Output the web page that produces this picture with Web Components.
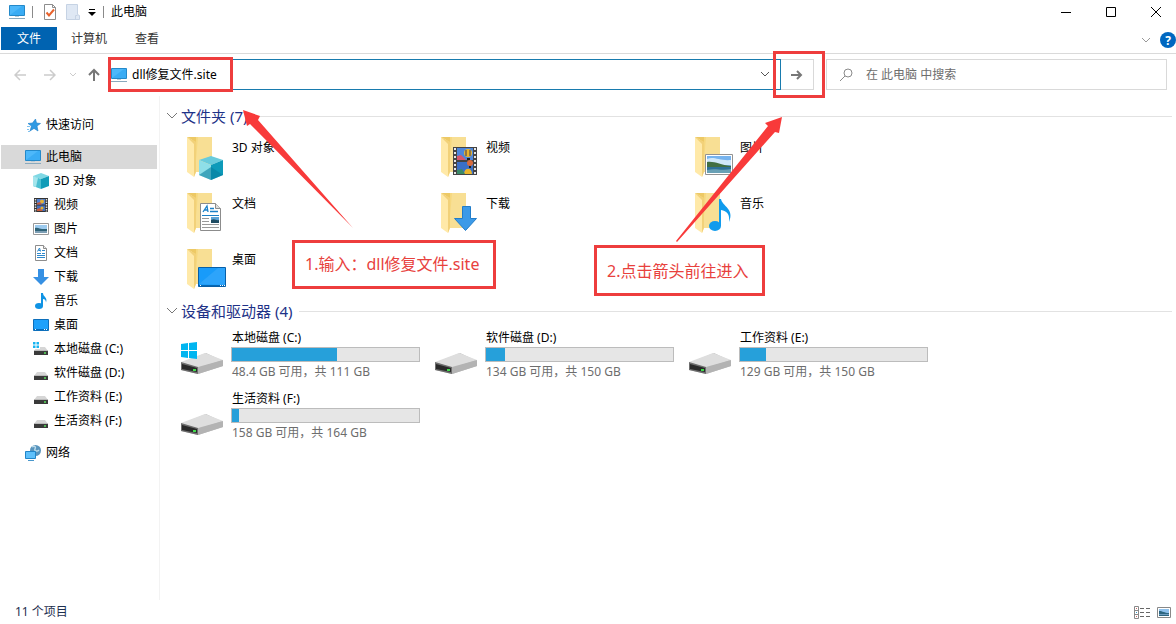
<!DOCTYPE html>
<html lang="zh-CN">
<head>
<meta charset="utf-8">
<meta name="viewport" content="width=device-width, initial-scale=1">
<title>此电脑</title>
<style>
  html, body {
    height: 100%;
    margin: 0;
  }

  body {
    background: #fff;
    color: #000;
    font: 12px/18px "Noto Sans", "Noto Sans CJK SC", sans-serif;
  }
</style>
</head>
<body>
<file-explorer></file-explorer>

<script>
const define = (name, html, setup) => {
  const template = document.createElement('template');
  template.innerHTML = html;

  customElements.define(name, class extends HTMLElement {
    constructor() {
      super();
      this.attachShadow({ mode: 'open' });
      this.shadowRoot.appendChild(template.content.cloneNode(true));
    }

    connectedCallback() {
      if (setup) setup(this, this.shadowRoot);
    }
  });
};

// Small icons, 16x16
const SMALL = {
  pc: `
    <path d="M.5 1.500h15v10H.5z" fill="#4db8fa" stroke="#2489c9"/>
    <path d="M1 11 13 2h2v9z" fill="#2ba2ee" opacity=".55"/>
    <path d="M0 14.500h16" stroke="#8aa9bd"/><path d="M6 12.500h4" stroke="#b9cbd6"/>`,
  check: `
    <path d="M2.500.5h8l3 3v12h-11z" fill="#fff" stroke="#8d8d8d"/>
    <path d="M10.500.5v3h3" fill="none" stroke="#8d8d8d"/>
    <path d="m4.500 8.500 2.500 3 5-6" fill="none" stroke="#e8622c" stroke-width="2"/>`,
  blank: `
    <path d="M1.500.5h11v10l2 1v4h-13z" fill="#dfe8f4" stroke="#c6d3e4"/>
    <path d="M12.500 11.500h-2v4" fill="none" stroke="#c6d3e4"/>`,
  star: `
    <path d="m10.500 2 1 4 4 .5-3.500 2.500 1 5-4-2.600-4 2.600 1.500-5-3.500-2.500 4.500-.5z" fill="#2f9ae3" stroke="#1c7fc9" stroke-width=".6"/>
    <path d="M2 9.500h3M2 12.500h2M3 14.500h2" stroke="#80c2ef"/>`,
  cube: `
    <path d="M8 0 16 3 8 6 0 3z" fill="#7fd8e4"/><path d="M0 3 8 6v10L0 13z" fill="#4cc0d2"/>
    <path d="M16 3 8 6v10l8-3z" fill="#119cb8"/><path d="M0 3 5 5 3 14 0 13z" fill="#a4e5ec"/>`,
  film: `
    <path d="M1 1h14v14H1z" fill="#333"/><path d="M4 2h8v5.500H4z" fill="#4f7fd1"/><path d="M4 8.500h8V14H4z" fill="#4270bd"/>
    <path d="M2.500 2v13M13.500 2v13" stroke="#ddd" stroke-width="1.500" stroke-dasharray="1.500 1"/>
    <circle cx="9" cy="4.500" r="2" fill="#e5b233"/><path d="M4 7.500V6l3-1 2 2.500zM4 14v-2l3-1 3 3z" fill="#c75b3c"/><circle cx="9" cy="11" r="1.500" fill="#e5b233"/>`,
  image: `
    <path d="M.5 2.500h15v11H.5z" fill="#fff" stroke="#999"/><path d="M2 4h12v8H2z" fill="#9dcbef"/>
    <path d="M2 7c3-1 5 1 7 1h5v4H2z" fill="#2f6378"/><path d="M2 10h12v2H2z" fill="#7c9eb4"/>`,
  doc: `
    <path d="M2.500.5h8l3 3v12h-11z" fill="#fff" stroke="#8d8d8d"/><path d="M10.500.5v3h3" fill="#eee" stroke="#8d8d8d"/>
    <path d="M4.500 6.500 6.500 3l1 3.500M5.500 5.500h2" fill="none" stroke="#2d88cc"/>
    <path d="M9 5.500h3M4 8.500h4M9 8.500h3M4 10.500h8M4 12.500h8" stroke="#2d88cc"/>`,
  down: `<path d="M5 0h6v8h5l-8 8-8-8h5z" fill="#3690e3"/>`,
  music: `
    <ellipse cx="6" cy="13" rx="4" ry="3" fill="#0f93e4"/>
    <path d="M8 0h2c0 4 5 4 3 9.500C13 7 11.500 6 10 6v7H8z" fill="#0f93e4"/>`,
  desktop: `
    <path d="M.5 2.500h15v11H.5z" fill="#1ea1fb" stroke="#0d6fbb"/><path d="M1 12.500h14" stroke="#086cb9"/>
    <path d="M2 12.500h1M11 12.500h1M13 12.500h1" stroke="#fff"/>`,
  drive: `
    <path d="M4 7h8l3 4H1z" fill="#d6d6d6"/><path d="M1 11h14v4H1z" fill="#3a3a3a"/>
    <path d="M1 10.500h14" stroke="#bbb"/><path d="M11 13h2" stroke="#59e05c" stroke-width="1.500"/>`,
  windrive: `
    <path d="M4 6h8l3 4H1z" fill="#d6d6d6"/><path d="M1 10h14v4H1z" fill="#3a3a3a"/>
    <path d="M1 9.500h14" stroke="#bbb"/><path d="M11 12h2" stroke="#59e05c" stroke-width="1.500"/>
    <path d="M-1 0h8v8h-8z" fill="#fff"/><path d="M0 1h2.500v2.500H0zM3.500 1H6v2.500H3.500zM0 4.500h2.500V7H0zM3.500 4.500H6V7H3.500z" fill="#18b4f0"/>`,
  network: `
    <circle cx="10.500" cy="5.500" r="5.500" fill="#5894bd"/><path d="M7 2c3-2 4 0 3 2s2 3 4 1" fill="none" stroke="#bcdbea" stroke-width="1.500"/>
    <path d="M.5 6.500h10v7H.5z" fill="#5ec0fb" stroke="#2185c8"/><path d="M3 15.500h6" stroke="#4997cc"/>`,
};

// Tile icons, 48x48
const FOLDER = `
  <path d="M14 3h20v35H16z" fill="#f6d87f"/><path d="M20 3h14v35H17z" fill="#f8df94"/>
  <path d="m9 3 9 5v30l-2 5-7-5z" fill="#ffe9a8"/><path d="m9 3 9 5v30l-2 5V10z" fill="#f2d179"/>
  <path d="M9 3h9v5z" fill="#edc965"/>`;
const DRIVE = `
  <path d="M3 34 28 24l17 8v5L20 45 3 41z" fill="#bdbdbd"/><path d="M3 33 27 24l18 7-25 8z" fill="#dedede"/>
  <path d="m3 33 17 5v7L3 41z" fill="#6e6e6e"/><path d="m4 35 15 4v4L4 40z" fill="#292929"/>
  <path d="M15 40h3v2h-3z" fill="#3fdc4a"/><path d="m20 38 25-7v6l-25 8z" fill="#b3b3b3"/>`;
const LARGE = {
  cube: FOLDER + `
    <path d="m33 22 12 4-12 5-12-5z" fill="#68cbdc"/><path d="m21 26 12 5v15l-12-5z" fill="#8edfe8"/>
    <path d="m45 26-12 5v15l12-5z" fill="#0d9ab9"/><path d="m21 41 12-8 12 8-12 5z" fill="#087f9f" opacity=".6"/>`,
  film: FOLDER + `
    <path d="M21 13h24v28H21z" fill="#444"/><path d="M25 14h16v12H25z" fill="#4c86dc"/><path d="M25 28h16v12H25z" fill="#3a70c8"/>
    <path d="M23 14v27M43 14v27" stroke="#e8e8e8" stroke-width="2" stroke-dasharray="2 2"/>
    <circle cx="36" cy="19" r="4" fill="#eab52c"/><path d="M34 16v6M38 16v6" stroke="#37345c"/><path d="M35 24h3v2h-3z" fill="#222"/>
    <path d="M25 26v-4l4-1 5 5z" fill="#d5566c"/><circle cx="38" cy="29" r="3" fill="#d86b3d"/><path d="M37 32h2v2h-2z" fill="#222"/>
    <path d="M32 40c0-7 8-7 8 0z" fill="#eab52c"/><path d="M25 40v-4l5-1 3 5z" fill="#3a8a68"/>`,
  image: FOLDER + `
    <path d="M19.500 20.500h27v20h-27z" fill="#fff" stroke="#929292"/><path d="M21 22h24v17H21z" fill="#76b3ee"/>
    <path d="M21 25c7-3 12 2 24 1v5H21z" fill="#d1e8fa"/><path d="M21 28c8-1 13 3 24 4v2H21z" fill="#426f43"/>
    <path d="M21 33h24v6H21z" fill="#2e7097"/><path d="M21 36c9-2 14 1 24-1v4H21z" fill="#69a0b5"/>`,
  doc: FOLDER + `
    <path d="M22.500 13.500h15l5 5v22h-20z" fill="#fff" stroke="#8c8c8c"/><path d="M37.500 13.500v5h5" fill="#ddd" stroke="#8c8c8c"/>
    <path d="m25 22 4-6 1 6M26 20h4M32 18.500h4M32 21.500h8" fill="none" stroke="#1b80c7" stroke-width="1.300"/>
    <path d="M24 25.500h17" stroke="#1b80c7"/><path d="M24 28.500h7M24 31.500h7M24 34.500h17M24 37.500h17" stroke="#999"/>
    <path d="M33 27h8v6h-8z" fill="#5ba3d6"/><path d="M33 30c4-2 5 1 8 0v3h-8z" fill="#1f4c63"/>`,
  down: FOLDER + `<path d="M30.500 16.500h8v12h6l-11 12-11-12h8z" fill="#3c9ae8" stroke="#227dc9"/>`,
  music: FOLDER + `
    <ellipse cx="29" cy="36" rx="6" ry="5" fill="#109bed"/><path d="M33 9h2c1 7 14 10 8 23 1-8-2-11-8-12v16h-2z" fill="#109bed"/>`,
  desktop: FOLDER + `
    <path d="M20.500 21.500h27v19h-27z" fill="#189bfa" stroke="#075fa8"/><path d="M21 38 40 22h7v17z" fill="#42adfb" opacity=".5"/>
    <path d="M21 39.500h26" stroke="#0767b2"/><path d="M22 39.500h1M42 39.500h1M44 39.500h1M46 39.500h1" stroke="#fff"/>`,
  drive: DRIVE,
  windrive: DRIVE + `
    <path d="m3 15 7-1v7H3zM11 14l8-1v8h-8zM3 22h7v7l-7-1zM11 22h8v8l-8-1z" fill="#00b5f0"/>`,
};

define('shell-icon', `
  <style>
    :host { display: block; flex: none; width: 16px; height: 16px; }
    :host([large]) { width: 48px; height: 48px; }
    svg { display: block; width: 100%; height: 100%; overflow: visible; }
  </style>
  <svg aria-hidden="true"></svg>
`, (host, root) => {
  const large = host.hasAttribute('large');
  const svg = root.querySelector('svg');
  svg.setAttribute('viewBox', large ? '0 0 48 48' : '0 0 16 16');
  svg.innerHTML = (large ? LARGE : SMALL)[host.getAttribute('name')];
});

const makeIcon = (name, large = false) => {
  const icon = document.createElement('shell-icon');
  icon.setAttribute('name', name);
  icon.toggleAttribute('large', large);
  return icon;
};

define('title-bar', `
  <style>
    :host { display: flex; align-items: center; height: 24px; padding: 0 5px 0 9px; }
    .sep { width: 1px; height: 12px; background: #8a8a8a; }
    .tools { display: flex; align-items: center; gap: 7px; flex: 1; }
    .tools .sep:first-of-type { margin-right: 2px; }
    button { display: grid; place-items: center; padding: 0; border: 0; background: none; color: inherit; }
    .more { width: 8px; height: 16px; }
    h1 { margin: 0; font-size: 12px; font-weight: 400; }
    .window { display: flex; gap: 15px; }
    .window button { width: 30px; height: 22px; }
    svg { display: block; fill: none; stroke: #000; }
  </style>
  <div class="tools">
    <shell-icon name="pc"></shell-icon>
    <span class="sep"></span>
    <button aria-label="属性"><shell-icon name="check"></shell-icon></button>
    <button aria-label="新建文件夹"><shell-icon name="blank"></shell-icon></button>
    <button class="more" aria-label="自定义快速访问工具栏"><svg width="8" height="8"><path d="M1 1.500h6"/><path d="M0 4h8L4 8z" fill="#000" stroke="none"/></svg></button>
    <span class="sep"></span>
    <h1>此电脑</h1>
  </div>
  <div class="window">
    <button aria-label="最小化"><svg width="10" height="10"><path d="M0 5.500h10"/></svg></button>
    <button aria-label="最大化"><svg width="10" height="10"><path d="M.5.5h9v9h-9z"/></svg></button>
    <button aria-label="关闭"><svg width="10" height="10"><path d="m0 0 10 10M10 0 0 10"/></svg></button>
  </div>
`);

define('ribbon-tabs', `
  <style>
    :host { display: flex; align-items: flex-end; height: 29px; padding-left: 1px; border-bottom: 1px solid #dadada; }
    nav { display: flex; flex: 1; height: 23px; margin-bottom: 3px; }
    button { padding: 0 14px; border: 0; background: none; font: inherit; color: #333; }
    .file { width: 56px; background: #0063b1; color: #fff; }
    .side { display: flex; align-items: center; gap: 9px; margin-bottom: 5px; }
    .side button { padding: 0; display: grid; }
    .side .help { width: 16px; height: 16px; place-items: center; border-radius: 50%; background: #0067c0; color: #fff; font-weight: 700; }
  </style>
  <nav>
    <button class="file">文件</button>
    <button>计算机</button>
    <button>查看</button>
  </nav>
  <div class="side">
    <button aria-label="展开功能区"><svg width="10" height="6" fill="none" stroke="#999"><path d="m1 1 4 4 4-4"/></svg></button>
    <button class="help">?</button>
  </div>
`);

define('address-row', `
  <style>
    :host { display: flex; height: 31px; padding: 5px 9px 5px 0; }
    .nav { display: flex; align-items: center; flex: none; width: 108px; box-sizing: border-box; padding-left: 12px; }
    button { display: grid; place-items: center; padding: 0; border: 0; background: none; }
    .nav button { width: 16px; height: 24px; }
    .nav .forward { margin-left: 14px; }
    .nav .recent { width: 10px; margin: 0 8px 0 10px; }
    svg { display: block; fill: none; }
    .place { position: relative; flex: 1; display: flex; align-items: center; gap: 5px; padding: 0 10px 0 2px; border: 1px solid #187bae; }
    input { flex: 1; min-width: 0; padding: 0; border: 0; outline: 0; background: none; font: inherit; color: inherit; }
    .go { position: relative; box-sizing: border-box; width: 33px; border: 1px solid #d9d9d9; border-left: 0; }
    .search { display: flex; align-items: center; gap: 13px; box-sizing: border-box; width: 29vw; margin-left: 12px; padding: 0 13px; border: 1px solid #d9d9d9; }
    .search input::placeholder { color: #6d6d6d; opacity: 1; }
    /* red frames laid over the fields */
    .mark { position: absolute; box-sizing: border-box; border: 3px solid #ee3d3d; pointer-events: none; }
    .place .mark { top: -3px; left: -1px; width: 125px; height: 35px; }
    .go .mark { inset: -9px -12px -9px -8px; }
  </style>
  <div class="nav">
    <button aria-label="后退"><svg width="12" height="12" stroke="#ccc" stroke-width="1.500"><path d="M12 6H1M6 1 1 6l5 5"/></svg></button>
    <button class="forward" aria-label="前进"><svg width="12" height="12" stroke="#ccc" stroke-width="1.500"><path d="M0 6h11M6 1l5 5-5 5"/></svg></button>
    <button class="recent" aria-label="最近浏览的位置"><svg width="6" height="5" stroke="#ccc"><path d="m0 1 3 3 3-3"/></svg></button>
    <button aria-label="上移"><svg width="12" height="14" stroke="#777" stroke-width="2"><path d="M6 13V2M1 7l5-5 5 5"/></svg></button>
  </div>
  <div class="place">
    <shell-icon name="pc"></shell-icon>
    <input aria-label="地址" value="dll修复文件.site">
    <button aria-label="以前的位置"><svg width="10" height="7" stroke="#555"><path d="m1 1 4 4 4-4"/></svg></button>
    <span class="mark"></span>
  </div>
  <button class="go" aria-label="转到">
    <svg width="12" height="12" stroke="#777" stroke-width="2"><path d="M0 6h10M6 2l4 4-4 4"/></svg>
    <span class="mark"></span>
  </button>
  <label class="search">
    <svg width="13" height="13" stroke="#8a8a8a"><circle cx="8" cy="5" r="4"/><path d="M5 8 0 13"/></svg>
    <input aria-label="搜索" placeholder="在 此电脑 中搜索">
  </label>
`);

define('nav-item', `
  <style>
    :host { display: block; }
    a { display: flex; align-items: center; gap: 5px; height: 24px; padding-left: 24px; color: inherit; text-decoration: none; }
    :host([child]) a { padding-left: 32px; }
    :host([selected]) a { background: #d9d9d9; }
    :host([spaced]) a { margin-top: 8px; }
  </style>
  <a href="#"><slot></slot></a>
`, (host, root) => {
  root.querySelector('a').prepend(makeIcon(host.getAttribute('icon')));
});

define('nav-pane', `
  <style>
    :host { display: block; flex: none; box-sizing: border-box; width: 160px; padding: 17px 2px 0 1px; border-right: 1px solid #f3f3f3; }
  </style>
  <nav><slot></slot></nav>
`);

define('item-group', `
  <style>
    :host { display: block; margin-bottom: 6px; }
    header { display: flex; align-items: center; gap: 4px; height: 22px; margin-bottom: 7px; }
    svg { display: block; fill: none; stroke: #777; }
    h2 { margin: 0 3px 0 0; font-size: 15px; line-height: 22px; font-weight: 400; color: #1e3287; }
    hr { flex: 1; height: 1px; margin: 0; border: 0; background: #e2e2e2; }
    .grid { display: grid; grid-template-columns: repeat(auto-fill, 254px); row-gap: 8px; padding-left: 12px; }
  </style>
  <section>
    <header>
      <svg width="11" height="8"><path d="m1 1 5 5 5-5"/></svg>
      <h2></h2>
      <hr>
    </header>
    <div class="grid"><slot></slot></div>
  </section>
`, (host, root) => {
  root.querySelector('h2').textContent = host.getAttribute('label');
});

define('folder-tile', `
  <style>
    :host { display: block; }
    .tile { display: flex; gap: 6px; height: 48px; }
    .name { padding-top: 5px; }
  </style>
  <div class="tile"><span class="name"><slot></slot></span></div>
`, (host, root) => {
  root.querySelector('.tile').prepend(makeIcon(host.getAttribute('icon'), true));
});

define('drive-tile', `
  <style>
    :host { display: block; }
    .tile { display: flex; gap: 5px; height: 53px; }
    .info { width: 189px; line-height: 17px; }
    .name, .free { padding-left: 1px; }
    .free { color: #6d6d6d; }
    .bar { height: 13px; margin: 1px 0; border: 1px solid #bcbcbc; background: #e6e6e6; }
    .used { height: 100%; background: #26a0da; }
  </style>
  <div class="tile">
    <div class="info">
      <div class="name"><slot></slot></div>
      <div class="bar" role="meter" aria-label="已用空间" aria-valuemin="0" aria-valuemax="100"><div class="used"></div></div>
      <div class="free"></div>
    </div>
  </div>
`, (host, root) => {
  const used = host.getAttribute('used');
  root.querySelector('.tile').prepend(makeIcon(host.getAttribute('icon') || 'drive', true));
  root.querySelector('.free').textContent = host.getAttribute('free');
  root.querySelector('.used').style.width = used + '%';
  root.querySelector('.bar').setAttribute('aria-valuenow', used);
});

define('status-bar', `
  <style>
    :host { display: flex; align-items: center; height: 24px; padding: 0 5px 0 15px; color: #1e2f4f; }
    .count { flex: 1; }
    .views { display: flex; align-items: center; gap: 7px; }
    button { display: block; padding: 0; border: 0; background: none; }
    svg { display: block; fill: none; }
  </style>
  <span class="count">11 个项目</span>
  <div class="views">
    <button aria-label="详细信息">
      <svg width="16" height="13" stroke="#888">
        <path d="M.5.5h4v12h-4zM.5 4.500h4M.5 8.500h4"/><path d="M6 2.500h4M12 2.500h4M6 6.500h4M12 6.500h4M6 10.500h4M12 10.500h4" stroke="#666"/>
        <path d="M2 2.500h1M2 10.500h1" stroke="#c66"/><path d="M2 6.500h1" stroke="#39c"/>
      </svg>
    </button>
    <button aria-label="大图标">
      <svg width="14" height="13">
        <path d="M.5 1.500h13v10H.5z" fill="#fff" stroke="#888"/><path d="M2 3h10v7H2z" fill="#8fc1ec"/>
        <path d="M2 5c4 0 5 2 10 2v3H2z" fill="#2d6680"/><path d="M2 8.500h10" stroke="#6e9cc0"/>
      </svg>
    </button>
  </div>
`);

define('callout-note', `
  <style>
    :host {
      position: absolute;
      display: block;
      padding: 11px 14px 12px 10px;
      border: 3px solid #ee3d3d;
      color: #e8413d;
      font-size: 16px;
      line-height: 20px;
      white-space: nowrap;
    }
  </style>
  <slot></slot>
`);

define('file-explorer', `
  <style>
    :host { position: relative; display: flex; flex-direction: column; min-height: 100vh; background: #fff; }
    .body { flex: 1; display: flex; padding-top: 1px; }
    main { flex: 1; min-width: 0; padding: 9px 4px 0 6px; }
    .arrows { position: absolute; top: 0; left: 0; width: 100%; height: 100%; pointer-events: none; fill: #f83a3a; }
    .first { left: 292px; top: 240px; }
    .second { left: 594px; top: 245px; padding: 13px 14px 12px 10px; }
  </style>
  <title-bar></title-bar>
  <ribbon-tabs></ribbon-tabs>
  <address-row></address-row>
  <div class="body">
    <nav-pane>
      <nav-item icon="star">快速访问</nav-item>
      <nav-item icon="pc" selected spaced>此电脑</nav-item>
      <nav-item icon="cube" child>3D 对象</nav-item>
      <nav-item icon="film" child>视频</nav-item>
      <nav-item icon="image" child>图片</nav-item>
      <nav-item icon="doc" child>文档</nav-item>
      <nav-item icon="down" child>下载</nav-item>
      <nav-item icon="music" child>音乐</nav-item>
      <nav-item icon="desktop" child>桌面</nav-item>
      <nav-item icon="windrive" child>本地磁盘 (C:)</nav-item>
      <nav-item icon="drive" child>软件磁盘 (D:)</nav-item>
      <nav-item icon="drive" child>工作资料 (E:)</nav-item>
      <nav-item icon="drive" child>生活资料 (F:)</nav-item>
      <nav-item icon="network" spaced>网络</nav-item>
    </nav-pane>
    <main>
      <item-group label="文件夹 (7)">
        <folder-tile icon="cube">3D 对象</folder-tile>
        <folder-tile icon="film">视频</folder-tile>
        <folder-tile icon="image">图片</folder-tile>
        <folder-tile icon="doc">文档</folder-tile>
        <folder-tile icon="down">下载</folder-tile>
        <folder-tile icon="music">音乐</folder-tile>
        <folder-tile icon="desktop">桌面</folder-tile>
      </item-group>
      <item-group label="设备和驱动器 (4)">
        <drive-tile icon="windrive" used="56" free="48.4 GB 可用，共 111 GB">本地磁盘 (C:)</drive-tile>
        <drive-tile used="10" free="134 GB 可用，共 150 GB">软件磁盘 (D:)</drive-tile>
        <drive-tile used="14" free="129 GB 可用，共 150 GB">工作资料 (E:)</drive-tile>
        <drive-tile used="4" free="158 GB 可用，共 164 GB">生活资料 (F:)</drive-tile>
      </item-group>
    </main>
  </div>
  <status-bar></status-bar>
  <svg class="arrows" aria-hidden="true">
    <path d="m243 110 17 6-2 4 95 108-103-104-3 2z"/>
    <path d="m782 117-3 16-4-1-98 110-1-1 92-115-3-3z"/>
  </svg>
  <callout-note class="first">1.输入：dll修复文件.site</callout-note>
  <callout-note class="second">2.点击箭头前往进入</callout-note>
`);
</script>
</body>
</html>
